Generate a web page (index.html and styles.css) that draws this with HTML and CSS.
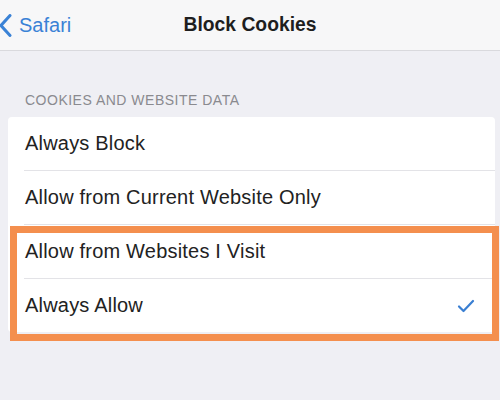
FILE: index.html
```html
<!DOCTYPE html>
<html lang="en">
<head>
    <meta charset="UTF-8">
    <title>Block Cookies</title>
    <link rel="stylesheet" href="styles.css">
</head>
<body>

<div class="navbar">
    <a class="back" href="#">
        <svg class="chevron" width="13" height="23" viewBox="0 0 13 23">
            <path d="M11 1.5 L2 11.5 L11 21.5" fill="none" stroke="#3a82d6" stroke-width="3" stroke-linecap="round" stroke-linejoin="round"/>
        </svg>
        <span>Safari</span>
    </a>
    <div class="title">Block Cookies</div>
    <div></div>
</div>

<div class="main">
    <div class="section-header">COOKIES AND WEBSITE DATA</div>
    <div class="card">
        <div class="row"><div class="row-body">Always Block</div></div>
        <div class="row"><div class="row-body">Allow from Current Website Only</div></div>
        <div class="group highlight">
            <div class="row"><div class="row-body">Allow from Websites I Visit</div></div>
            <div class="row">
                <div class="row-body">
                    <span>Always Allow</span>
                    <svg class="check" width="18" height="14" viewBox="0 0 18 14">
                        <path d="M2 7.5 L6.5 12 L16 2" fill="none" stroke="#3a7fd2" stroke-width="2.2" stroke-linecap="round" stroke-linejoin="round"/>
                    </svg>
                </div>
            </div>
        </div>
    </div>
</div>

</body>
</html>
```

FILE: styles.css
```css
body {
    font-family: "Liberation Sans", Arial, sans-serif;
    margin: 0;
    height: 400px;
    background-color: #efeff4;
    overflow: hidden;
}
.navbar {
    display: grid;
    grid-template-columns: 1fr auto 1fr;
    align-items: center;
    height: 50px;
    background-color: #f7f7f8;
    border-bottom: 1px solid #d9d9dd;
}
.back {
    display: flex;
    align-items: center;
    gap: 7px;
    color: #3a82d6;
    text-decoration: none;
    font-size: 20px;
}
.chevron {
    display: block;
    margin-left: -1px;
}
.title {
    font-size: 19.3px;
    font-weight: bold;
    color: #1e1e1e;
}
.main {
    padding-top: 41px;
}
.section-header {
    font-size: 14px;
    line-height: 16px;
    letter-spacing: 0.5px;
    color: #8a8a8f;
    padding-left: 25px;
    margin-bottom: 9px;
}
.card {
    margin: 0 5px 0 8px;
    background-color: #fff;
    border-radius: 4px;
}
.row {
    padding-left: 16px;
}
.row-body {
    display: flex;
    align-items: center;
    justify-content: space-between;
    height: 53px;
    padding: 0 20px 0 1px;
    border-top: 1px solid #e3e3e7;
    font-size: 20px;
    letter-spacing: 0.2px;
    color: #222;
}
.card > .row:first-child .row-body {
    border-top: none;
}
.check {
    display: block;
}
.group {
    position: relative;
}
.highlight::after {
    content: "";
    position: absolute;
    top: 2px;
    left: 2px;
    right: -4px;
    bottom: -9px;
    border: 7px solid #f48f4e;
    pointer-events: none;
}
```
